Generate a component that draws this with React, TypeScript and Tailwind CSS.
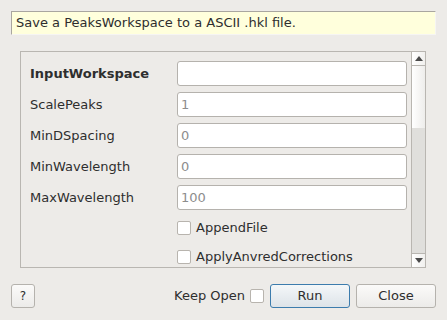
import React from 'react';

const fields = [
  { label: 'InputWorkspace', value: '', bold: true },
  { label: 'ScalePeaks', value: '1' },
  { label: 'MinDSpacing', value: '0' },
  { label: 'MinWavelength', value: '0' },
  { label: 'MaxWavelength', value: '100' },
];

const checks = ['AppendFile', 'ApplyAnvredCorrections'];

const Box: React.FC<{ className?: string }> = ({ className = '' }) => (
  <span className={`block w-[14px] h-[14px] bg-white border border-[#b8b4ae] rounded-[2px] ${className}`} />
);

const App: React.FC = () => {
  return (
    <div
      className="w-[447px] h-[320px] bg-[#edebe8] text-[13px] text-[#2e2e2e] overflow-hidden"
      style={{ fontFamily: '"DejaVu Sans", sans-serif' }}
    >
      {/* Description */}
      <div className="px-[11px] pt-[11px]">
        <div className="h-[24px] bg-[#ffffdc] border-t border-l border-[#a9a6a0] border-r border-b border-r-[#f6f5f3] border-b-[#f6f5f3] flex items-center pl-[4px]">
          Save a PeaksWorkspace to a ASCII .hkl file.
        </div>
      </div>

      {/* Properties */}
      <div className="ml-[20px] mt-[16px] w-[406px] h-[217px] border border-[#b9b6b1] flex">
        <div className="flex-1 overflow-hidden pl-[9px] pt-[9px]">
          <div className="flex flex-col gap-[6px]">
            {fields.map((f) => (
              <div key={f.label} className="flex items-center h-[25px]">
                <span className={`w-[147px] ${f.bold ? 'font-bold' : ''}`}>{f.label}</span>
                <div className="w-[230px] h-[25px] bg-white border border-[#b5b2ad] rounded-[3px] flex items-center pl-[3px] text-[#8d8d8d]">
                  {f.value}
                </div>
              </div>
            ))}
          </div>
          <div className="flex flex-col gap-[4px] mt-[5px]">
            {checks.map((c) => (
              <div key={c} className="flex items-center h-[25px] pl-[147px]">
                <Box />
                <span className="ml-[5px]">{c}</span>
              </div>
            ))}
          </div>
        </div>

        {/* Scrollbar */}
        <div className="w-[14px] border-l border-[#b9b6b1] flex flex-col bg-[#e0dfdc]">
          <div className="h-[14px] bg-gradient-to-r from-white to-[#f1f0ee] border-b border-[#b9b6b1] flex items-center justify-center">
            <svg width="8" height="5" viewBox="0 0 8 5"><path d="M0 5 L4 0 L8 5 Z" fill="#4a4a4a" /></svg>
          </div>
          <div className="h-[62px] bg-gradient-to-r from-white to-[#eeedeb]" />
          <div className="flex-1" />
          <div className="h-[14px] bg-gradient-to-r from-white to-[#f1f0ee] border-t border-[#b9b6b1] flex items-center justify-center">
            <svg width="8" height="5" viewBox="0 0 8 5"><path d="M0 0 L8 0 L4 5 Z" fill="#4a4a4a" /></svg>
          </div>
        </div>
      </div>

      {/* Buttons */}
      <div className="flex items-center mt-[16px] px-[11px] h-[24px]">
        <button className="w-[24px] h-[24px] rounded-[3px] border border-[#b5b2ad] bg-gradient-to-b from-[#fbfaf9] to-[#ecebe9] text-[12px] leading-none">
          ?
        </button>
        <span className="ml-auto">Keep Open</span>
        <Box className="ml-[5px]" />
        <button className="ml-[6px] w-[80px] h-[24px] rounded-[3px] border border-[#3c7cad] bg-gradient-to-b from-[#f4f7f9] to-[#dde3e8]">
          Run
        </button>
        <button className="ml-[6px] w-[80px] h-[24px] rounded-[3px] border border-[#b5b2ad] bg-gradient-to-b from-[#fbfaf9] to-[#ecebe9]">
          Close
        </button>
      </div>
    </div>
  );
};

export default App;
